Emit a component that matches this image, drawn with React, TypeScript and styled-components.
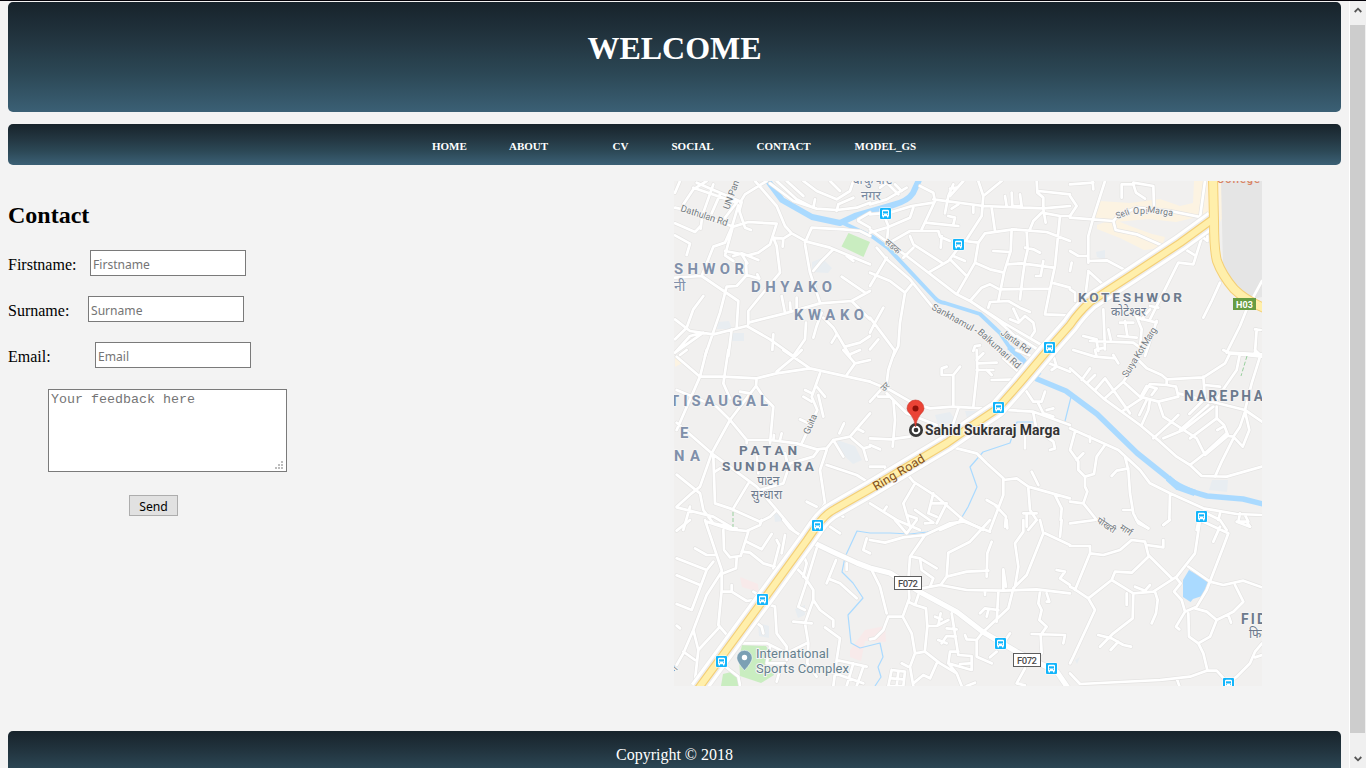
import React from 'react';
import styled, { createGlobalStyle } from 'styled-components';

const GlobalStyle = createGlobalStyle`
  * { box-sizing: border-box; }
  body { margin: 0; background: #f3f3f3; overflow: hidden; font-family: 'Liberation Serif', serif; font-size: 16px; color: #000; }
`;

const panelGradient = 'linear-gradient(to bottom, #17232b 0%, #233641 36%, #2c4856 66%, #3b6075 100%)';

const Page = styled.div`
  display: flex;
  width: 1366px;
  height: 768px;
  overflow: hidden;
  border-top: 1px solid #05030a;
`;
const Content = styled.div`
  width: 1349px;
  padding: 1px 8px 0;
  display: flex;
  flex-direction: column;
`;
const Panel = styled.div`
  background: ${panelGradient};
  border-radius: 5px;
  color: #fff;
  flex: none;
`;
const Header = styled(Panel)`
  height: 110px;
  padding-top: 28px;
  text-align: center;
`;
const Title = styled.h1`
  margin: 0;
  font-size: 32px;
  line-height: 37px;
`;
const Nav = styled(Panel)`
  display: flex;
  height: 41px;
  margin-top: 12px;
  padding-left: 424px;
`;
const NavLink = styled.a<{ $width: number }>`
  flex: none;
  width: ${p => p.$width}px;
  padding-top: 2px;
  font-size: 11px;
  font-weight: bold;
  line-height: 41px;
  white-space: nowrap;
`;
const Main = styled.main`
  display: flex;
  height: 566px;
  flex: none;
`;
const ContactForm = styled.form`
  width: 666px;
  flex: none;
  padding-top: 36px;
`;
const Heading = styled.h2`
  margin: 0 0 21px;
  font-size: 24px;
  line-height: 28px;
`;
const Field = styled.label`
  display: flex;
  height: 26px;
  margin-bottom: 20px;
  line-height: 29px;
`;
const FieldName = styled.span<{ $width: number }>`
  width: ${p => p.$width}px;
`;
const TextInput = styled.input`
  width: 156px;
  height: 26px;
  padding: 3px 2px 0;
  border: 1px solid #7a7a7a;
  background: #fff;
  border-radius: 0;
  font: 12.1px 'Noto Sans', sans-serif;
  outline: none;
  &::placeholder { color: #757575; opacity: 1; }
`;
const MessageBox = styled.div`
  position: relative;
  width: 239px;
  height: 83px;
  margin: 21px 0 0 40px;
`;
const Message = styled.textarea`
  display: block;
  width: 239px;
  height: 83px;
  padding: 2px;
  resize: none;
  border: 1px solid #7a7a7a;
  border-radius: 0;
  font: 13.33px 'Liberation Mono', monospace;
  outline: none;
  &::placeholder { color: #757575; opacity: 1; }
`;
const Grip = styled.svg`
  position: absolute;
  right: 4px;
  bottom: 3px;
`;
const SendButton = styled.button`
  display: block;
  width: 49px;
  height: 21px;
  margin: 23px 0 0 121px;
  padding: 2px 0 0;
  border: 1px solid #adadad;
  border-radius: 0;
  background: #e1e1e1;
  color: #000;
  font: 12.2px/18px 'Noto Sans', sans-serif;
`;
const MapSvg = styled.svg`
  display: block;
  flex: none;
  margin-top: 16px;
  width: 588px;
  height: 505px;
  font-family: Roboto, 'Noto Sans', sans-serif;
`;
const Footer = styled(Panel)`
  height: 60px;
  padding-top: 14px;
  text-align: center;
  line-height: 20px;
`;
const Scrollbar = styled.div`
  display: flex;
  flex-direction: column;
  width: 17px;
  padding-right: 1px;
  border-left: 1px solid #fff;
  background: #f0f0f0;
`;
const ScrollButton = styled.div<{ $height: number }>`
  height: ${p => p.$height}px;
  display: flex;
  justify-content: center;
  padding-top: ${p => p.$height === 24 ? 5 : 21}px;
`;
const Thumb = styled.div`
  height: 708px;
  background: #cdcdcd;
`;

type Tile = { x: number; y: number; roads: string };

/* Street network, split in sheets; sheet units are a third of a map pixel. */
const tiles: Tile[] = [
  { x: 670, y: 176,
    roads: 'M15 50L30 15M15 95L60 105 190 152 235 138 320 143 300 205 265 230 235 238 165 225M40 85L70 40 110 15M70 35L200 80M80 20L150 50 215 78M130 25L100 110M150 55L125 112M200 80L165 125M205 88L185 155 165 200 130 212 95 300 205 375 200 455M15 305L95 300M15 142L75 168 92 150M15 178L60 203 50 237M98 110L92 158M210 80L225 55 290 15M215 78L208 105 225 155 243 162M255 15L320 90 345 150 365 172 410 197 480 215 600 265M187 158L165 238 190 255M228 262L230 297 200 330 170 332 150 410 105 540M190 240L215 232 265 252M215 235L232 262M308 180L320 210 330 290 280 350 235 405 235 445M308 185L340 188 365 172M340 188L338 212M345 410L335 360M360 380L362 405M380 365L380 400M230 297L268 308 262 295M405 205L420 290 450 380M490 220L455 255 430 285M235 440L345 412 450 382 545 375 600 345M545 375L580 410 600 430M515 302L585 350M405 200L425 155 520 160 570 165 600 180M530 240L550 255M15 430L60 465 130 475 230 450 300 490 370 540 405 490 408 440M15 530L100 470M185 460L175 540M310 475L307 522M455 410L440 450 430 485M460 425L490 455 540 540M525 512L570 500 600 480M500 475L485 500M300 22L370 75 440 98 500 102 560 95 600 80M320 15L380 70 430 95M350 15L400 60M400 15L440 45 500 70 540 45 550 15M480 15L510 45M500 105L505 85 550 65M430 95L435 70M565 135L600 155M565 130L600 110M15 530L60 480 100 470M15 490L50 455 70 400 100 360' },
  { x: 870, y: 176,
    roads: 'M0 160L110 240 260 355 300 375 400 440 520 510M300 375L380 430 440 485M20 215L50 250 120 310 185 390M0 115L60 110 125 90 190 80M0 85L50 70 110 35M30 35L50 20 85 55M75 25L95 45M150 30L190 50 195 75 155 160M0 170L50 155 120 125 130 95M45 125L55 150 50 205 120 165 205 165 210 182 240 195M215 180L212 215M190 70L340 90 520 97 600 90M395 15L340 60 335 120 290 190M325 15L340 60M250 25L235 60 225 112M240 60L280 15M240 38L260 35M165 140L265 150M235 120L255 125 250 145M245 98L265 85M310 90L310 110M285 195L325 200 345 172 430 160 530 168 600 195M365 95L375 165M270 210L235 255 175 290M120 180L130 205 215 260M130 215L100 245M240 250L290 300M250 240L285 255M325 200L315 260 260 355M315 260L360 280 402 290 385 375M370 225L420 228M425 160L422 225 402 290M405 60L410 90M425 50L427 90 455 90 450 55M500 15L502 50 520 65 520 95M505 45L600 55M480 160L490 135 515 110 570 120 600 120M520 100L527 140M570 120L555 270 540 340 525 415 600 418M410 265L455 262 550 275M470 165L473 220 465 255 457 310 450 370M465 215L490 220 510 230M520 255L512 300 498 300M545 320L600 335M390 340L540 338M300 375L335 335 360 325 388 340M355 395L360 378 415 375 450 395 480 408M420 430L445 440 465 420 490 440 495 465 485 480M430 398L445 430M0 290L60 315 105 350M50 245L0 330M125 325L105 350 90 440 85 510 70 540M40 395L15 440 0 470M0 425L45 485 75 525M25 490L0 520M310 525L315 510 330 508M440 480L510 525' },
  { x: 1070, y: 176,
    roads: 'M105 15L70 125 55 180 55 260 M0 125L130 135 145 118 200 95 300 105 400 125M130 135L137 162 200 175 280 210M155 65L155 25 190 25 198 50 225 68M190 20L250 30 252 90M0 225L25 240 55 240M55 255L110 253 180 290M55 285L110 335M55 290L48 345M0 60L20 90 0 120M0 25L70 20M68 15L70 40M405 15L390 125M400 170L370 265 325 260 240 430M330 210L375 238M400 185L412 195 412 180M450 320L425 375 400 425M576 315L530 400 510 450 470 530M555 460L572 462M560 460L555 530M480 530L576 535M240 390L265 395M200 425L260 440M240 400L215 430M100 400L105 520M60 495L190 500 210 515M40 480L80 490M80 520L105 515M80 495L85 525M145 480L200 485M165 435L172 480M115 460L122 490M150 440L190 440M195 410L215 460 210 515M0 340L15 350 15 375M0 285L5 260M260 435L225 540' },
  { x: 670, y: 350,
    roads: 'M20 20L90 80 160 80 260 85 320 70 420 55 600 95M110 0L90 80 20 240M175 0L160 100 180 145M30 15L50 0M320 65L380 15 395 0M340 0L420 55M520 0L555 40 530 75M535 15L570 0M555 40L600 30M260 85L258 108 180 210 125 310 90 410 65 430 20 470M260 110L280 140 310 170 300 280M20 120L140 170 180 210 230 270 300 270 380 280 440 298 470 295 490 270 540 260 600 190M210 125L240 130M450 70L425 140 442 180 395 280M440 110L465 140M445 135L460 200M400 140L425 155M405 120L425 130M20 218L125 310 260 410 320 480 370 540M130 320L135 460 180 475 270 515 300 500 320 480M150 355L135 365M20 374L90 430 100 480 130 520 200 535M20 472L130 500 190 535M60 470L40 540M235 400L190 475M270 420L340 400 360 340 430 320 445 300M260 310L265 370M310 270L312 255M330 270L335 250M470 300L450 360 465 460 440 500M470 345L560 375 600 400M410 455L440 470M490 270L520 320M508 250L522 220M560 235L580 245M545 265L580 295 600 290M580 295L590 330M390 208L412 218M520 500L500 490M230 270L230 280M345 310L355 350' },
  { x: 870, y: 350,
    roads: 'M75 0L55 60 50 100 0 155M0 95L60 120 130 160 180 175 250 170 490 185 600 225M50 130L110 190 200 225M70 150L75 210 68 290M25 140L60 140M0 265L60 268 120 260M0 285L30 298M270 50L250 75 250 170M250 75L215 75 215 55 230 50M320 0L322 60 310 170M320 60L370 60M325 40L380 38M350 60L365 75M320 30L340 10M265 175L255 205 235 265M440 0L500 25 600 65M365 90L450 88M460 110L490 155 515 155 525 125M505 160L520 190 550 200M490 190L500 240 550 275 555 295 540 300M465 240L465 295M530 180L550 175M400 25L450 70 460 100M240 290L320 310 350 340 400 385 400 435 360 540M400 390L440 385 475 410 600 445M485 365L505 405M475 415L480 480 500 510M350 450L385 470M375 465L408 500 405 530M460 490L500 490M470 490L470 530M555 435L575 475 572 510M0 350L45 350 50 375M110 370L130 395 200 440 280 510 340 540M135 400L100 460 120 530M190 430L175 490 200 500M185 460L230 460 200 520M0 460L80 510 150 540M50 470L40 485M135 480L190 518 165 520M110 495L140 505M280 510L210 540M500 510L475 540M545 0L560 50 545 60' },
  { x: 1070, y: 350,
    roads: 'M0 55L100 145 210 225 270 275 320 320 360 345 395 378 470 380 576 350M10 0L75 20 135 25M75 0L80 20M130 15L145 40M0 235L145 300 210 360 240 400 300 430 400 475 500 492 576 495M35 90L60 55M50 100L75 75M75 120L105 85 180 190M105 145L160 95 200 35M200 25L230 55 275 75 290 88 400 82 465 40 480 10 576 20M460 0L480 10M290 88L290 105 240 102 220 135M160 95L210 140 265 155 325 140 318 110 290 105M265 155L280 200 380 265 405 315 470 260M240 150L235 180 215 225M215 135L230 108 260 115 245 135M215 145L155 185M230 150L208 195M325 195L300 220 250 265M400 80L405 150 525 180 576 215M395 155L358 192M405 105L450 110M430 170L340 240 280 265M415 165L330 240M440 170L440 205 360 265M440 205L462 225 475 258 490 260 518 290 538 240 525 185 510 230 490 260M442 240L460 230M490 265L455 335 435 380M470 250L405 310 360 345M510 10L500 60 465 110 440 150M570 20L545 100 525 180M555 0L576 20M325 130L420 155M15 245L0 300 25 335 25 360 45 380 45 410 52 425 40 460 80 510M20 330L40 310M45 380L72 372 80 320 105 285M60 260L60 275M165 320L175 360 180 430 190 490 205 520 235 535M175 355L140 362 125 378M160 480L185 480M300 430L298 510 280 525M0 455L40 460M0 520L75 510M390 490L380 540M400 485L450 510 470 540M510 490L505 515 530 515 540 530M525 495L535 515M450 490L445 510' },
  { x: 670, y: 520,
    roads: 'M105 0L155 150 155 210 145 315 175 350M20 32L60 0M110 5L180 28 230 33 270 15 275 0M160 30L162 90 180 112 212 108 235 35M75 85L110 105 135 105M200 115L198 145 160 160M230 65L275 88 305 42M215 95L240 98 280 130 330 145M310 145L328 75 320 60M345 45L335 100M20 115L110 150 130 125M110 150L65 270 20 252M20 166L90 195M155 155L110 225 70 330 40 400 20 435M70 330L85 390 75 480M85 390L150 320M40 395L75 420M160 215L185 215 230 243 250 240M185 195L185 215M250 215L265 225M20 317L30 325M300 255L315 260 320 340 350 380 350 420M255 305L275 320 280 340M375 140L400 165 430 210 430 240 405 310 415 370 412 430 440 470M440 85L405 200 385 260 405 270M400 105L410 130 400 170M470 190L498 120M480 178L510 190 560 235M430 240L450 270 490 300 490 320M465 322L510 355 500 420 590 440M370 305L425 310M215 370L290 370 350 400 410 370M160 435L205 470 210 495M340 0L360 25 390 45M480 20L510 40M590 55L580 90 600 100M530 130L530 150M550 430L530 498M580 440L560 498M500 420L490 498M480 455L580 490M330 450L320 485M300 380L290 430 345 430' },
  { x: 870, y: 520,
    roads: 'M0 60L45 68 100 52 165 45 240 10 280 5M75 0L110 40 140 0M165 45L120 110 115 180 118 235 98 290 55 290 40 330 15 355 0 358M125 110L150 115 200 145M150 115L155 150 190 175 180 200M360 0L300 65 235 98 230 170 212 195M230 170L290 155 355 152M365 65L352 100 350 170M270 0L360 35M410 0L412 25M460 0L460 35 435 70 445 140 435 200M510 0L520 40 470 165 430 205 415 265 340 335M525 40L600 75M570 50L575 0M155 205L210 195 290 210 400 212 500 208 600 220M400 210L400 148 408 200M560 150L585 155 570 175 600 195M5 150L30 200 50 280M385 215L380 305M345 215L345 225M330 280L345 265 385 270M355 270L350 290M145 225L135 255 168 265 172 320 165 390M115 245L135 255M175 318L200 318 235 300M195 290L215 298M212 280L205 315M205 360L230 370M230 325L260 328M215 370L230 348 258 350M245 280L265 405 305 408 305 450 235 430 240 395 265 395M270 432L300 430M340 335L320 360 320 410 365 430M285 345L290 358 320 360M360 412L380 395M400 370L420 340M98 290L125 340 135 400 165 395 210 430 260 460 275 498M135 400L120 440 130 498M200 430L180 475 160 465 130 490M95 430L115 440M65 450L105 455 100 498 55 498 65 450M85 455L80 498M65 475L100 478M290 498L315 488M510 215L505 250 515 270 508 300 530 320 512 345 515 400M485 342L585 345 580 370M530 220L538 245 530 245M465 445L440 490 465 496M235 430L260 460' },
  { x: 1070, y: 520,
    roads: 'M0 78L60 78 60 100 15 210M60 100L100 105 150 90 185 60 225 65 235 105 305 175M230 75L280 82 280 60M390 0L375 100 320 170 250 215 190 220 125 180 55 235 10 205 0 200M55 235L75 270 10 410 0 430M0 460L30 492 270 480 360 470 410 452 440 452 475 490 500 470 540 430 555 395 576 370M555 412L576 405M320 475L328 498M125 180L135 155 185 158 215 130 235 110M170 220L170 255M195 200L225 212 240 195M190 220L188 295 130 340 90 380M85 345L125 355 160 375 183 380M145 365L122 390M255 215L263 240 258 280 245 310M320 175L332 190 312 215 335 240 345 275 318 320 328 328M345 275L380 260 410 210 460 80 475 40 400 5M355 140L420 185 460 195 520 182 576 202M450 20L430 65M495 195L520 245 490 275 440 300 410 275 375 265M475 285L483 308M440 300L420 350 385 370 357 350 355 280M385 370L400 400 412 450M500 5L540 20M200 0L235 25M280 15L300 0' },
];

const ringRoad = 'M1213 219L1180 243L1130 276L1090 302Q1078 313 1070 325L1047 351L1020 383L997 409L970 427L947 443L870 489L835 509Q825 514 816 527L807 540L767 595L698 689';
const highway = 'M1213 178L1214 220Q1214 250 1217 261Q1222 275 1234 289Q1245 300 1264 308';
const feederRoad = 'M808 540L833 552 857 563 870 568 890 573 920 592 957 612 983 632 1017 652 1057 672 1068 688';
const tileTransform = (t: Tile) => `translate(${t.x} ${t.y}) scale(.33333)`;

const Bus = ({ x, y }: { x: number; y: number }) => (
  <g transform={`translate(${x - 5.5} ${y - 5.5})`}>
    <rect x="-.5" y="-.5" width="12" height="12" rx="1.5" fill="#fff" />
    <rect width="11" height="11" rx="1" fill="#12b5fb" />
    <path d="M2 3Q2 1.8 3.2 1.8H7.8Q9 1.8 9 3V8.2H8.4V9.4H7V8.2H4V9.4H2.6V8.2H2Z" fill="#fff" />
    <path d="M3 3.3H8V5.5H3Z" fill="#12b5fb" />
    <path d="M3 6.6h1M7 6.6h1" stroke="#12b5fb" strokeWidth=".8" />
  </g>
);

type LabelProps = { x: number; y: number; w?: number; size?: number; color?: string; weight?: number; rotate?: number; halo?: boolean; children: string };
const Label = ({ x, y, w, size = 9, color = '#747b81', weight = 400, rotate = 0, halo = true, children }: LabelProps) => (
  <text x={x} y={y} fontSize={size} fill={color} fontWeight={weight} textLength={w}
    transform={rotate ? `rotate(${rotate} ${x} ${y})` : undefined}
    stroke={halo ? '#f6f5f4' : 'none'} strokeWidth={halo ? 2 : 0} strokeLinejoin="round" paintOrder="stroke">{children}</text>
);

const RouteBadge = ({ x, y }: { x: number; y: number }) => (
  <g>
    <rect x={x + .5} y={y + .5} width="27" height="13" fill="#fff" stroke="#5d5d5d" />
    <text x={x + 4} y={y + 10.5} fontSize="9.5" fontWeight="500" fill="#4a4a4a" textLength="20">F072</text>
  </g>
);

const buses = [[885.5, 213.5], [958.5, 244.5], [1049.5, 347.5], [998.5, 407.5], [817.5, 525.5], [762.5, 599.5], [721.5, 661.5], [1201.5, 516.5], [1000.5, 643.5], [1051.5, 668.5], [1228.5, 683.5]];

const LocationMap = () => (
  <MapSvg viewBox="674 181 588 505">
    <rect x="674" y="181" width="588" height="505" fill="#f1f0ef" />
    <g fill="#fcf3e2">
      <path d="M1194 181H1210V214L1176 222 1149 219 1115 222 1092 217 1100 201 1130 203 1160 199 1180 206 1193 203Z" />
      <path d="M1097 225L1113 219 1130 226 1152 234 1165 237 1162 248 1144 250 1120 238 1097 229Z" />
      <path d="M675 358L684 362 675 367Z" /><path d="M1217 181H1222L1224 215 1220 222Z" />
    </g>
    <path d="M1221 181H1262V297L1248 300 1234 286 1223 267Z" fill="#e5e5e5" />
    <path fill="#e8edf1" d="M812 262L822 258 832 268 828 273 812 272ZM718 322L729 321 732 329 717 329ZM732 333H744V341H732ZM837 440L855 446 862 460 853 464 839 451ZM1212 480L1228 480 1227 492 1209 490ZM935 415L950 412 957 423 938 424ZM965 411L980 411 982 418 967 418ZM1096 252L1105 250 1105 260 1097 257ZM758 623L769 626 769 638 759 636ZM795 609L805 605 805 615 798 618ZM1075 660L1080 657 1077 664ZM774 514L780 513 783 521 775 522Z" />
    <path fill="#f8eaea" d="M740 577L758 584 759 592 742 587ZM850 650L865 630 885 626 886 642 865 641 861 661 850 657Z" />
    <g fill="#c9edc0">
      <path d="M848.5 233L870 242 863.5 257 841.5 246.5Z" />
      <path d="M742 645L766 646 773 657 769 665 774 675 761 683 740 676 739 658ZM723 674L735 671 740 686H721Z" />
    </g>
    <g fill="none" stroke="#aadaff" strokeLinejoin="round">
      <path d="M768 181L782 200L812 217L840 223L855 216L893 205Q908 201 913 193L919 180" strokeWidth="6" />
      <path d="M843 223L873 237L888 248L935 298Q938 302 945 303L980 314L1000 333L1012 351Q1030 365 1040 375" strokeWidth="3.900" />
      <path d="M1009 347L1023 360L1037 379L1066 391L1097 414L1137 453L1167 477Q1180 489 1207 496L1243 499L1263 504" strokeWidth="5.500" />
      <path d="M1168 478L1178 487 1195 493" strokeWidth="6.500" />
      <path d="M1034 422H1017L1010 443 983 452 970 467 977 487 968 507 959 522 938 529 927 532 910 534 890 533 870 533 857 531 845 557 842 572 853 583 863 598 848 615 851 643 860 648 880 643 883 657 878 667 881 677 875 686M1071 397L1065 421" strokeWidth="1.200" />
    </g>
    <path d="M1189 570L1208.500 581.500 1202 596 1193 599 1190.500 602 1183 597V580Z" fill="#aadaff" />
    <g fill="none" strokeLinecap="round" strokeLinejoin="round">
      {tiles.map((t, i) => <path key={i} d={t.roads} transform={tileTransform(t)} stroke="#e4e3e2" strokeWidth="12" />)}
      <path d={feederRoad} stroke="#e4e4e4" strokeWidth="6.500" />
      {tiles.map((t, i) => <path key={i} d={t.roads} transform={tileTransform(t)} stroke="#fff" strokeWidth="8.200" />)}
      <path d={feederRoad} stroke="#fff" strokeWidth="5.200" />
      <path d={ringRoad} stroke="#e7e6e5" strokeWidth="19" strokeLinecap="butt" />
      <path d={ringRoad} stroke="#fff" strokeWidth="17.500" strokeLinecap="butt" />
      <path d={ringRoad} stroke="#eeedec" strokeWidth="11.500" strokeLinecap="butt" />
      <path d={ringRoad} stroke="#f4cf76" strokeWidth="8.500" />
      <path d={highway} stroke="#f4cf76" strokeWidth="10" />
      <path d={ringRoad} stroke="#ffefab" strokeWidth="6.200" />
      <path d={highway} stroke="#ffefab" strokeWidth="8" />
      <path d="M733 512V527M1247 356L1241 376" stroke="#98cf9d" strokeWidth="1" strokeDasharray="4 2" strokeLinecap="butt" />
    </g>
    <Label x={680} y={211} w={49} size={9.5} rotate={18}>Dathulan Rd</Label>
    <Label x={729} y={210} w={30} size={9.5} rotate={-70}>UN Pan</Label>
    <Label x={852} y={184} w={40} size={12} color="#7788a0">चाकुपाट</Label>
    <Label x={861} y={200} size={13} color="#7788a0">नगर</Label>
    <Label x={884} y={243} size={9} rotate={40}>सडक</Label>
    <Label x={674} y={274} w={70} size={14.8} weight={700} color="#8090aa">SHWOR</Label>
    <Label x={674} y={291} size={14} color="#8090aa">नी</Label>
    <Label x={751} y={292} w={81} size={14.8} weight={700} color="#8090aa">DHYAKO</Label>
    <Label x={794} y={320} w={70} size={14.8} weight={700} color="#8090aa">KWAKO</Label>
    <Label x={670} y={406} w={98} size={14.8} weight={700} color="#8090aa">TISAUGAL</Label>
    <Label x={680} y={438} size={14.8} weight={700} color="#8090aa">E</Label>
    <Label x={674} y={461} w={26} size={14.8} weight={700} color="#8090aa">NA</Label>
    <Label x={739} y={455} w={58} size={13.6} weight={700} color="#6c7a8d">PATAN</Label>
    <Label x={722} y={471} w={92} size={13.6} weight={700} color="#6c7a8d">SUNDHARA</Label>
    <Label x={757} y={485} w={22} size={12} color="#6c7a8d">पाटन</Label>
    <Label x={751} y={499} w={31} size={12} color="#6c7a8d">सुन्धारा</Label>
    <Label x={1078} y={302} w={104} size={13.6} weight={700} color="#6c7a8d">KOTESHWOR</Label>
    <Label x={1111} y={316} w={35} size={12} color="#6c7a8d">कोटेश्वर</Label>
    <Label x={1184} y={401} w={79} size={13.8} weight={700} color="#6c7a8d">NAREPHA</Label>
    <Label x={1241} y={624} w={25} size={13.8} weight={700} color="#6c7a8d">FID</Label>
    <Label x={1249} y={638} size={12} color="#6c7a8d">फिद</Label>
    <Label x={1117} y={219} w={14} rotate={-20}>Seti</Label>
    <Label x={1133} y={214} w={15}>Opi</Label>
    <Label x={1147} y={212} w={26} rotate={9}>Marga</Label>
    <Label x={1217} y={183} w={43} size={11} weight={500} color="#d98464" halo={false}>College</Label>
    <Label x={1127} y={378} w={57} size={9.5} rotate={-58}>Surya Kot Marg</Label>
    <Label x={931} y={309} w={51} size={9.5} rotate={29}>Sankhamul -</Label>
    <Label x={977} y={333} w={54} size={9.5} rotate={42}>Balkumari Rd</Label>
    <Label x={1000} y={334} w={34} size={9.5} rotate={36}>Janta Rd</Label>
    <Label x={809} y={435} w={21} size={9.5} rotate={-67}>Guita</Label>
    <Label x={884} y={392} size={9} rotate={-45}>उर</Label>
    <Label x={1096} y={522} size={9} rotate={34}>पोखरी</Label>
    <Label x={1119} y={529} size={9} rotate={34}>मार्ग</Label>
    <Label x={675} y={673} size={9} rotate={-50}>र्ग</Label>
    <Label x={876} y={491} w={58} size={12.5} color="#824f1c" rotate={-31} halo={false}>Ring Road</Label>
    {buses.map(([x, y]) => <Bus key={`${x}-${y}`} x={x} y={y} />)}
    <RouteBadge x={894} y={576} />
    <RouteBadge x={1013} y={653} />
    <rect x="1233" y="298" width="23" height="12" fill="#679d43" />
    <Label x={1236} y={307.5} w={17} size={9} weight={700} color="#fff" halo={false}>H03</Label>
    <path d="M744.500 670.500Q736.800 662 736.800 658A7.700 7.700 0 0 1 752.200 658Q752.200 662 744.500 670.500Z" fill="#7ba0b4" stroke="#fff" strokeWidth=".5" />
    <circle cx="744.500" cy="657.500" r="2.700" fill="#fff" />
    <Label x={756} y={658} w={73} size={13} color="#66818f">International</Label>
    <Label x={756} y={672.5} w={93} size={13} color="#66818f">Sports Complex</Label>
    <circle cx="916" cy="430" r="5.700" fill="#fff" stroke="#383838" strokeWidth="2.700" />
    <circle cx="916" cy="430" r="2.300" fill="#333" />
    <path d="M915.500 427Q914.800 420 911 415Q907 411 907 408.500A8.500 8.500 0 0 1 924 408.500Q924 411 920 415Q916.300 420 915.500 427Z" fill="#ea4335" stroke="#c9372c" strokeWidth=".6" />
    <circle cx="915.500" cy="408.500" r="3" fill="#8c1008" />
    <Label x={925} y={435} w={135} size={14} weight={700} color="#333">Sahid Sukraraj Marga</Label>
  </MapSvg>
);

const links: [string, number][] = [['HOME', 77], ['ABOUT', 103.5], ['CV', 59], ['SOCIAL', 85], ['CONTACT', 98], ['MODEL_GS', 70]];
const fields: [string, number][] = [['Firstname', 82], ['Surname', 80], ['Email', 87]];

export default function App() {
  return (
    <>
      <GlobalStyle />
      <Page>
        <Content>
          <Header><Title>WELCOME</Title></Header>
          <Nav>{links.map(([name, width]) => <NavLink key={name} $width={width}>{name}</NavLink>)}</Nav>
          <Main>
            <ContactForm>
              <Heading>Contact</Heading>
              {fields.map(([name, width]) => (
                <Field key={name}>
                  <FieldName $width={width}>{name}:</FieldName>
                  <TextInput placeholder={name} />
                </Field>
              ))}
              <MessageBox>
                <Message placeholder="Your feedback here" />
                <Grip width="8" height="8" fill="#bdbdbd"><path d="M6 0h2v2h-2zM3 3h2v2h-2zM6 3h2v2h-2zM0 6h2v2h-2zM3 6h2v2h-2zM6 6h2v2h-2z" /></Grip>
              </MessageBox>
              <SendButton type="button">Send</SendButton>
            </ContactForm>
            <LocationMap />
          </Main>
          <Footer>Copyright © 2018</Footer>
        </Content>
        <Scrollbar>
          <ScrollButton $height={24}><svg width="8" height="8"><path d="M.7 6L4 2.700 7.300 6" fill="none" stroke="#555" strokeWidth="1.800" /></svg></ScrollButton>
          <Thumb />
          <ScrollButton $height={35}><svg width="8" height="10"><path d="M.7 3L4 6.300 7.300 3" fill="none" stroke="#555" strokeWidth="1.800" /></svg></ScrollButton>
        </Scrollbar>
      </Page>
    </>
  );
}
